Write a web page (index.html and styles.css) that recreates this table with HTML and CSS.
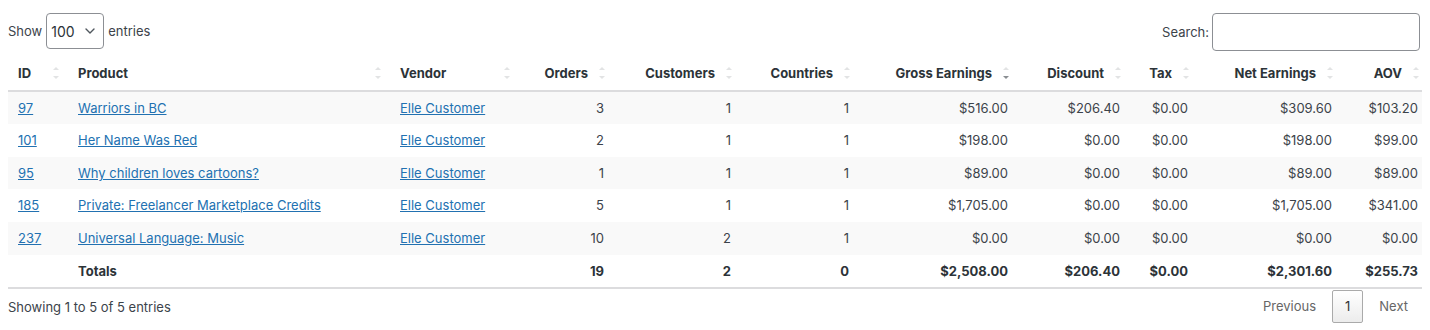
FILE: index.html
```html
<!DOCTYPE html>
<html>
<head>
<meta charset="utf-8">
<link rel="stylesheet" href="styles.css">
</head>
<body>
<div class="dt-wrapper">
  <div class="dt-top">
    <label class="dt-length">Show
      <span class="select-wrap">
        <select class="dt-select"><option>100</option></select>
        <svg class="chev" width="10" height="6" viewBox="0 0 10 6"><path d="M1 1l4 4 4-4" fill="none" stroke="#50575e" stroke-width="1.4" stroke-linecap="round" stroke-linejoin="round"/></svg>
      </span>
      entries</label>
    <label class="dt-search">Search:<input type="search" class="dt-input"></label>
  </div>
  <table class="dt-table">
    <colgroup>
      <col style="width:60px"><col style="width:322px"><col style="width:129px"><col style="width:95px"><col style="width:127px"><col style="width:118px"><col style="width:159px"><col style="width:112px"><col style="width:68px"><col style="width:144px"><col>
    </colgroup>
    <thead>
      <tr>
        <th>ID<span class="sort"></span></th>
        <th>Product<span class="sort"></span></th>
        <th>Vendor<span class="sort"></span></th>
        <th class="num">Orders<span class="sort"></span></th>
        <th class="num">Customers<span class="sort"></span></th>
        <th class="num">Countries<span class="sort"></span></th>
        <th class="num">Gross Earnings<span class="sort desc"></span></th>
        <th class="num">Discount<span class="sort"></span></th>
        <th class="num">Tax<span class="sort"></span></th>
        <th class="num">Net Earnings<span class="sort"></span></th>
        <th class="num">AOV<span class="sort"></span></th>
      </tr>
    </thead>
    <tbody>
      <tr>
        <td><a href="#">97</a></td><td><a href="#">Warriors in BC</a></td><td><a href="#">Elle Customer</a></td>
        <td class="num">3</td><td class="num">1</td><td class="num">1</td><td class="num">$516.00</td><td class="num">$206.40</td><td class="num">$0.00</td><td class="num">$309.60</td><td class="num">$103.20</td>
      </tr>
      <tr>
        <td><a href="#">101</a></td><td><a href="#">Her Name Was Red</a></td><td><a href="#">Elle Customer</a></td>
        <td class="num">2</td><td class="num">1</td><td class="num">1</td><td class="num">$198.00</td><td class="num">$0.00</td><td class="num">$0.00</td><td class="num">$198.00</td><td class="num">$99.00</td>
      </tr>
      <tr>
        <td><a href="#">95</a></td><td><a href="#">Why children loves cartoons?</a></td><td><a href="#">Elle Customer</a></td>
        <td class="num">1</td><td class="num">1</td><td class="num">1</td><td class="num">$89.00</td><td class="num">$0.00</td><td class="num">$0.00</td><td class="num">$89.00</td><td class="num">$89.00</td>
      </tr>
      <tr>
        <td><a href="#">185</a></td><td><a href="#">Private: Freelancer Marketplace Credits</a></td><td><a href="#">Elle Customer</a></td>
        <td class="num">5</td><td class="num">1</td><td class="num">1</td><td class="num">$1,705.00</td><td class="num">$0.00</td><td class="num">$0.00</td><td class="num">$1,705.00</td><td class="num">$341.00</td>
      </tr>
      <tr>
        <td><a href="#">237</a></td><td><a href="#">Universal Language: Music</a></td><td><a href="#">Elle Customer</a></td>
        <td class="num">10</td><td class="num">2</td><td class="num">1</td><td class="num">$0.00</td><td class="num">$0.00</td><td class="num">$0.00</td><td class="num">$0.00</td><td class="num">$0.00</td>
      </tr>
    </tbody>
    <tfoot>
      <tr>
        <th></th><th>Totals</th><th></th>
        <th class="num">19</th><th class="num">2</th><th class="num">0</th><th class="num">$2,508.00</th><th class="num">$206.40</th><th class="num">$0.00</th><th class="num">$2,301.60</th><th class="num">$255.73</th>
      </tr>
    </tfoot>
  </table>
  <div class="dt-bottom">
    <div class="dt-info">Showing 1 to 5 of 5 entries</div>
    <div class="dt-paging">
      <span class="pg-btn disabled">Previous</span>
      <span class="pg-btn current">1</span>
      <span class="pg-btn disabled">Next</span>
    </div>
  </div>
</div>
</body>
</html>
```
FILE: styles.css
```css
html, body {
  background: #fff;
}
body {
  margin: 8px;
  font-family: Inter, "Noto Sans", sans-serif;
  font-size: 13px;
  color: #3c434a;
}
.dt-wrapper {
  width: 100%;
}
.dt-top {
  display: flex;
  justify-content: space-between;
  align-items: flex-start;
  padding-top: 5px;
}
.dt-length {
  display: flex;
  align-items: center;
  gap: 4px;
  height: 36px;
}
.select-wrap {
  position: relative;
  display: inline-flex;
}
.dt-select {
  appearance: none;
  -webkit-appearance: none;
  font-family: inherit;
  font-size: 14px;
  color: #2c3338;
  width: 58px;
  height: 36px;
  padding: 0 24px 0 4px;
  border: 1px solid #8c8f94;
  border-radius: 4px;
  background: #fff;
}
.chev {
  position: absolute;
  right: 9px;
  top: 15px;
  pointer-events: none;
}
.dt-search {
  display: flex;
  align-items: center;
  gap: 3px;
  height: 38px;
  margin-right: 2px;
}
.dt-input {
  width: 208px;
  height: 38px;
  box-sizing: border-box;
  border: 1px solid #8c8f94;
  border-radius: 4px;
  margin: 0;
}
.dt-table {
  width: calc(100% + 6px);
  table-layout: fixed;
  border-collapse: collapse;
  margin-top: 6px;
}
.dt-table th,
.dt-table td {
  line-height: 16.6px;
  text-align: left;
  white-space: nowrap;
}
.dt-table thead th {
  position: relative;
  font-weight: 700;
  color: #2c3338;
  padding: 8px 26px 8px 10px;
  border-bottom: 2px solid #dcdcde;
}
.dt-table thead th.num,
.dt-table td.num,
.dt-table tfoot th.num {
  text-align: right;
}
.dt-table td {
  padding: 8px 10px;
}
.dt-table tbody tr:nth-child(odd) {
  background: #f9f9f9;
}
.dt-table tfoot th {
  font-weight: 700;
  color: #2c3338;
  padding: 8px 10px;
  border-bottom: 2px solid #dcdcde;
}
.dt-table a {
  color: #2271b1;
  text-decoration: underline;
}
.sort {
  position: absolute;
  right: 9px;
  top: 50%;
  width: 6px;
  height: 12px;
  margin-top: -6px;
}
.sort::before,
.sort::after {
  content: "";
  position: absolute;
  left: 0;
  border-left: 3px solid transparent;
  border-right: 3px solid transparent;
}
.sort::before {
  top: 0;
  border-bottom: 3px solid #e2e3e4;
}
.sort::after {
  bottom: 0;
  border-top: 3px solid #e2e3e4;
}
.sort.desc::after {
  border-top-color: #8a8e92;
}
.dt-bottom {
  display: flex;
  justify-content: space-between;
  align-items: center;
  padding-top: 1px;
}
.dt-info {
  color: #3c434a;
}
.dt-paging {
  display: flex;
  align-items: center;
  gap: 2px;
}
.pg-btn {
  padding: 0 13px;
  height: 31px;
  line-height: 31px;
  color: #666;
  border: 1px solid transparent;
  border-radius: 2px;
}
.pg-btn.current {
  color: #333;
  border-color: #aaa;
  background: linear-gradient(#fff, #ececec);
  padding: 0 12px;
}
```
